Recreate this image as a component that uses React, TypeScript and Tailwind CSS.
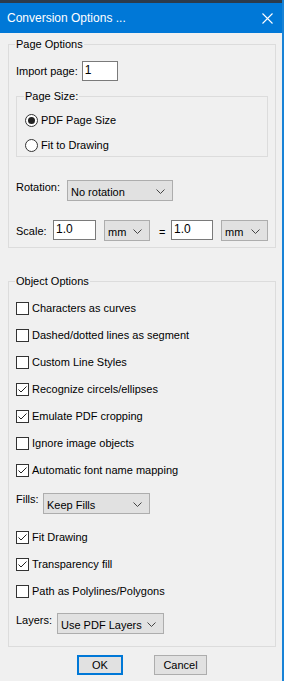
import React from 'react';

const font = { fontFamily: '"Liberation Sans", Arial, sans-serif' };

function Chevron() {
  return (
    <svg width="9" height="5" viewBox="0 0 9 5" className="shrink-0">
      <path d="M0.5 0.5 L4.5 4.5 L8.5 0.5" fill="none" stroke="#444" strokeWidth="1" />
    </svg>
  );
}

function Dropdown({ value, width }: { value: string; width: string }) {
  return (
    <div className={`${width} h-[21px] bg-[#e1e1e1] border border-[#adadad] flex items-center justify-between pl-[3px] pr-[7px] pt-[2px]`}>
      <span>{value}</span>
      <Chevron />
    </div>
  );
}

function TextBox({ value, width }: { value: string; width: string }) {
  return (
    <div className={`${width} h-[20px] bg-white border border-[#7a7a7a] pl-[2px] pt-[1px] text-[12px] leading-[15px]`}>
      {value}
    </div>
  );
}

function Check({ label, checked = false }: { label: string; checked?: boolean }) {
  return (
    <div className="h-[20px] flex items-center">
      <div className="w-[13px] h-[13px] bg-white border border-[#333] flex items-center justify-center">
        {checked && (
          <svg width="11" height="11" viewBox="0 0 11 11">
            <path d="M1.5 5.5 L4 8 L9.5 2.5" fill="none" stroke="#222" strokeWidth="1" />
          </svg>
        )}
      </div>
      <span className="ml-[3px]">{label}</span>
    </div>
  );
}

function Radio({ label, checked = false }: { label: string; checked?: boolean }) {
  return (
    <div className="h-[20px] flex items-center">
      <div className="w-[13px] h-[13px] rounded-full bg-white border border-[#333] flex items-center justify-center">
        {checked && <div className="w-[7px] h-[7px] rounded-full bg-[#222]" />}
      </div>
      <span className="ml-[3px]">{label}</span>
    </div>
  );
}

export default function App() {
  return (
    <div
      className="w-[284px] h-[681px] bg-[#f0f0f0] border-r-2 border-[#1883d7] flex flex-col text-[11px] leading-[14px] text-black overflow-hidden"
      style={font}
    >
      <div className="h-[3px] bg-[#2c3b4b]" />
      <div className="h-[30px] bg-[#0078d7] flex items-center justify-between pl-[7px] pr-[9px] text-white text-[12px]">
        <span>Conversion Options ...</span>
        <svg width="11" height="11" viewBox="0 0 11 11">
          <path d="M0.5 0.5 L10.5 10.5 M10.5 0.5 L0.5 10.5" stroke="#fff" strokeWidth="1.1" />
        </svg>
      </div>

      {/* Page Options */}
      <fieldset className="ml-2 mt-[4px] w-[268px] border border-[#dcdcdc] pb-[6px]">
        <legend className="ml-[6px] px-[1px] leading-[14px]">Page Options</legend>
        <div className="mt-[10px] ml-[7px] flex items-center">
          <span>Import page:</span>
          <div className="ml-[4px]">
            <TextBox value="1" width="w-[36px]" />
          </div>
        </div>

        <fieldset className="ml-[7px] mt-[8px] w-[252px] border border-[#dcdcdc] pb-[1px]">
          <legend className="ml-[7px] px-[1px] leading-[14px]">Page Size:</legend>
          <div className="mt-[7px] ml-[8px] flex flex-col gap-[5px]">
            <Radio label="PDF Page Size" checked />
            <Radio label="Fit to Drawing" />
          </div>
        </fieldset>

        <div className="mt-[23px] ml-[7px] flex items-start">
          <span className="w-[51px]">Rotation:</span>
          <Dropdown value="No rotation" width="w-[106px]" />
        </div>

        <div className="mt-[19px] ml-[7px] flex items-start">
          <span className="w-[37px] pt-[4px]">Scale:</span>
          <TextBox value="1.0" width="w-[43px]" />
          <div className="ml-[8px]">
            <Dropdown value="mm" width="w-[46px]" />
          </div>
          <span className="ml-[9px] w-[12px] pt-[5px]">=</span>
          <TextBox value="1.0" width="w-[42px]" />
          <div className="ml-[8px]">
            <Dropdown value="mm" width="w-[47px]" />
          </div>
        </div>
      </fieldset>

      {/* Object Options */}
      <fieldset className="ml-2 mt-[26px] w-[268px] border border-[#dcdcdc] pb-[12px]">
        <legend className="ml-[6px] px-[1px] leading-[14px]">Object Options</legend>
        <div className="mt-[10px] ml-[7px] flex flex-col gap-[7px]">
          <Check label="Characters as curves" />
          <Check label="Dashed/dotted lines as segment" />
          <Check label="Custom Line Styles" />
          <Check label="Recognize circels/ellipses" checked />
          <Check label="Emulate PDF cropping" checked />
          <Check label="Ignore image objects" />
          <Check label="Automatic font name mapping" checked />
        </div>

        <div className="mt-[12px] ml-[7px] flex items-start">
          <span className="w-[27px]">Fills:</span>
          <div className="mt-[1px]">
            <Dropdown value="Keep Fills" width="w-[107px]" />
          </div>
        </div>

        <div className="mt-[13px] ml-[7px] flex flex-col gap-[7px]">
          <Check label="Fit Drawing" checked />
          <Check label="Transparency fill" checked />
          <Check label="Path as Polylines/Polygons" />
        </div>

        <div className="mt-[12px] ml-[7px] flex items-start">
          <span className="w-[41px]">Layers:</span>
          <Dropdown value="Use PDF Layers" width="w-[107px]" />
        </div>
      </fieldset>

      <div className="mt-[8px] flex justify-center gap-[31px] pl-[2px]">
        <div className="w-[46px] h-[20px] bg-[#e1e1e1] border-2 border-[#0078d7] flex items-center justify-center">
          OK
        </div>
        <div className="w-[53px] h-[20px] bg-[#e1e1e1] border border-[#adadad] flex items-center justify-center">
          Cancel
        </div>
      </div>
    </div>
  );
}
